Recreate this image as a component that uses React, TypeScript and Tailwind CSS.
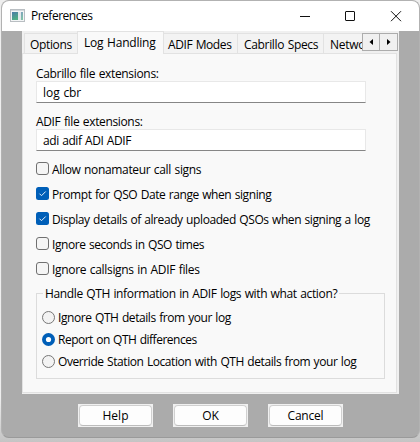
import type { ReactNode } from "react";

function TitleIcon() {
  return (
    <svg width="15" height="14" viewBox="0 0 15 14" className="block shrink-0">
      <defs>
        <linearGradient id="pane" x1="0" y1="0" x2="0.4" y2="1">
          <stop offset="0" stopColor="#4b7ba8" />
          <stop offset="1" stopColor="#4fae84" />
        </linearGradient>
      </defs>
      <rect x="0.5" y="0.5" width="14" height="12" fill="#f3f5f6" stroke="#b9bec2" />
      <rect x="1" y="1" width="13" height="1" fill="#d3d8dc" />
      <rect x="2" y="3" width="6" height="8" fill="url(#pane)" />
      <rect x="8" y="3" width="3" height="8" fill="#e3e8ea" />
      <rect x="11" y="3" width="2" height="8" fill="url(#pane)" opacity="0.7" />
    </svg>
  );
}

function Check({ on, label, track }: { on?: boolean; label: string; track: string }) {
  return (
    <label className="flex h-[25px] items-center">
      {on ? (
        <svg width="13" height="13" viewBox="0 0 13 13" className="block shrink-0">
          <rect width="13" height="13" rx="2.5" fill="#005fb8" />
          <path d="M3.5 6.7 5.5 8.7 9.7 4.5" fill="none" stroke="#e5effa" strokeWidth="1" />
        </svg>
      ) : (
        <span className="size-[13px] shrink-0 rounded-[3px] border border-[#707070] bg-[#f5f5f5]" />
      )}
      <span className={"ml-[3px] pt-[2px] " + track}>{label}</span>
    </label>
  );
}

function Radio({ on, label, track }: { on?: boolean; label: string; track: string }) {
  return (
    <label className="flex h-[22px] items-center">
      <svg width="13" height="13" viewBox="0 0 13 13" className="block shrink-0">
        {on ? (
          <>
            <circle cx="6.5" cy="6.5" r="6.5" fill="#005fb8" />
            <circle cx="6.5" cy="6.5" r="2.6" fill="#fff" />
          </>
        ) : (
          <circle cx="6.5" cy="6.5" r="6" fill="#f3f3f3" stroke="#777" />
        )}
      </svg>
      <span className={"ml-[3px] pt-[2px] " + track}>{label}</span>
    </label>
  );
}

function Field({ children }: { children: ReactNode }) {
  return (
    <div className="flex h-[22px] w-[330px] items-center border border-[#e8e8e8] border-b-[#868686] bg-white pt-[2px] pl-[6px]">
      {children}
    </div>
  );
}

function Button({ children }: { children: ReactNode }) {
  return (
    <div className="h-[23px] w-[75px] bg-[#f0f0f0] p-px">
      <button className="flex size-full items-center justify-center rounded-[4px] border border-[#d0d0d0] border-b-[#bcbcbc] bg-[#fdfdfd]">
        {children}
      </button>
    </div>
  );
}

export default function App() {
  return (
    <div className="h-[442px] w-[420px] overflow-hidden bg-linear-to-b from-[#eeeeee] from-90% to-[#c4c4c4] pl-px font-['Open_Sans','Noto_Sans',sans-serif] text-[12px] leading-[16px] [word-spacing:0.7px] whitespace-nowrap text-black">
      <div className="flex h-[438px] w-[419px] flex-col overflow-hidden rounded-[8px] border border-[#b2b2b2] border-b-[#9a9a9a] bg-[#ababab]">
        <header className="flex h-[30px] shrink-0 items-center bg-white pl-2">
          <TitleIcon />
          <span className="ml-[6px] tracking-[-0.5px]">Preferences</span>
          <svg width="104" height="12" viewBox="0 0 104 12" className="mr-4 ml-auto block" fill="none" stroke="#111">
            <path d="M1 6.5h10" />
            <rect x="46.5" y="1.5" width="9" height="9" rx="0.5" />
            <path d="M92 1.2 102 11.2M102 1.2 92 11.2" />
          </svg>
        </header>

        <main className="ml-5 h-[363px] w-[377px] shrink-0 bg-[#f0f0f0]">
          <nav className="flex h-[22px] items-end pl-[2px]">
            <div className="h-5 w-[53px] border-t border-l border-[#e2e2e2] bg-[#f3f3f3] pt-[3px] pl-[5px] tracking-[-0.35px]">Options</div>
            <div className="relative -mb-px h-[23px] w-[87px] self-start border border-b-0 border-[#e2e2e2] bg-[#f9f9f9] pt-[3px] pl-[6px] tracking-[-0.2px]">Log Handling</div>
            <div className="h-5 w-[73px] border-t border-[#e2e2e2] bg-[#f3f3f3] pt-[3px] pl-1 tracking-[-0.4px]">ADIF Modes</div>
            <div className="h-5 w-[86px] border-t border-l border-[#e2e2e2] bg-[#f3f3f3] pt-[3px] pl-[6px] tracking-[-0.33px]">Cabrillo Specs</div>
            <div className="h-5 w-[39px] overflow-hidden border-t border-l border-[#e2e2e2] bg-[#f3f3f3] pt-[3px] pl-[6px] tracking-[-0.3px]">Network</div>
            <div className="mb-[2px] flex self-end">
              <span className="flex h-[18px] w-[18px] items-center justify-center border border-[#acacac] bg-[#f0f0f0]">
                <svg width="4" height="6" viewBox="0 0 4 6"><path d="M4 0v6L0.5 3z" /></svg>
              </span>
              <span className="-ml-px flex h-[18px] w-[19px] items-center justify-center border border-[#acacac] bg-[#f0f0f0]">
                <svg width="4" height="6" viewBox="0 0 4 6"><path d="M0 0v6L3.5 3z" /></svg>
              </span>
            </div>
          </nav>

          <section className="h-[340px] w-[375px] border border-[#e2e2e2] bg-[#f9f9f9] pt-[11px] pl-[13px]">
            <div className="h-4 pt-px tracking-[-0.33px]">Cabrillo file extensions:</div>
            <Field><span className="tracking-[-0.05px]">log cbr</span></Field>
            <div className="mt-[10px] h-4 pt-px tracking-[-0.35px]">ADIF file extensions:</div>
            <Field><span className="tracking-[-0.42px]">adi adif ADI ADIF</span></Field>
            <div className="mt-[5px]">
              <Check label="Allow nonamateur call signs" track="tracking-[-0.33px]" />
              <Check on label="Prompt for QSO Date range when signing" track="tracking-[-0.42px]" />
              <Check on label="Display details of already uploaded QSOs when signing a log" track="tracking-[-0.41px]" />
              <Check label="Ignore seconds in QSO times" track="tracking-[-0.43px]" />
              <Check label="Ignore callsigns in ADIF files" track="tracking-[-0.31px]" />
            </div>
            <fieldset className="mt-[4px] h-[94px] w-[349px] border border-[#dcdcdc] pl-[5px]">
              <legend className="ml-px h-4 pt-px px-[2px] tracking-[-0.36px]">Handle QTH information in ADIF logs with what action?</legend>
              <div className="mt-[5px]">
                <Radio label="Ignore QTH details from your log" track="tracking-[-0.42px]" />
                <Radio on label="Report on QTH differences" track="tracking-[-0.5px]" />
                <Radio label="Override Station Location with QTH details from your log" track="tracking-[-0.42px]" />
              </div>
            </fieldset>
          </section>
        </main>

        <footer className="mt-[10px] ml-[76px] flex gap-5">
          <Button>Help</Button>
          <Button>OK</Button>
          <Button><span className="tracking-[-0.2px]">Cancel</span></Button>
        </footer>
      </div>
    </div>
  );
}
